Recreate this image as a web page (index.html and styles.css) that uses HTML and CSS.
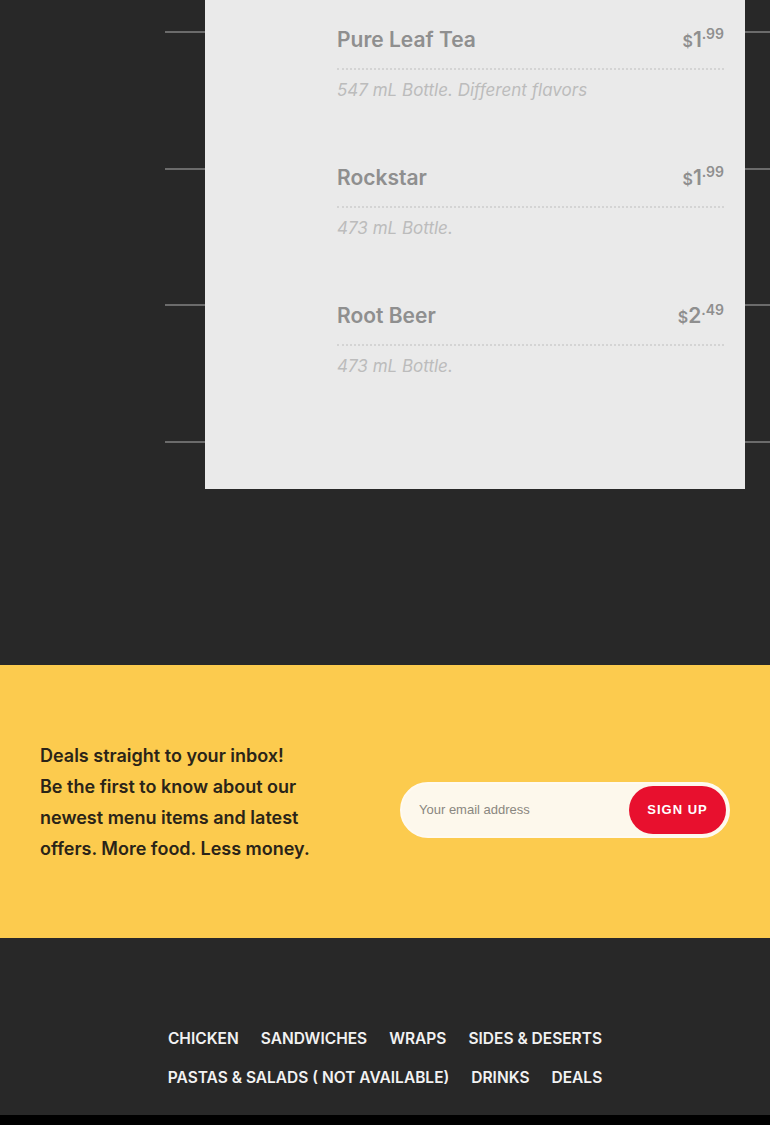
FILE: index.html
```html
<!DOCTYPE html>
<html lang="en">
<head>
    <meta charset="UTF-8">
    <meta name="viewport" content="width=device-width, initial-scale=1.0">
    <title>Drinks</title>
    <link rel="stylesheet" href="styles.css">
</head>
<body>
    <section class="menu">
        <div class="menu-lines">
            <div class="card">
                <div class="item">
                    <div class="item-head">
                        <h3 class="item-name">Pure Leaf Tea</h3>
                        <span class="price"><span class="cur">$</span>1<sup>.99</sup></span>
                    </div>
                    <p class="item-desc">547 mL Bottle. Different flavors</p>
                </div>
                <div class="item">
                    <div class="item-head">
                        <h3 class="item-name">Rockstar</h3>
                        <span class="price"><span class="cur">$</span>1<sup>.99</sup></span>
                    </div>
                    <p class="item-desc">473 mL Bottle.</p>
                </div>
                <div class="item">
                    <div class="item-head">
                        <h3 class="item-name">Root Beer</h3>
                        <span class="price"><span class="cur">$</span>2<sup>.49</sup></span>
                    </div>
                    <p class="item-desc">473 mL Bottle.</p>
                </div>
            </div>
        </div>
    </section>

    <section class="newsletter">
        <p class="newsletter-text">Deals straight to your inbox!<br>Be the first to know about our newest menu items and latest offers. More food. Less money.</p>
        <form class="signup" action="#" method="get">
            <input type="email" placeholder="Your email address">
            <button type="button">SIGN UP</button>
        </form>
    </section>

    <footer>
        <nav class="footer-nav">
            <a href="#">CHICKEN</a>
            <a href="#">SANDWICHES</a>
            <a href="#">WRAPS</a>
            <a href="#">SIDES &amp; DESERTS</a>
            <a href="#">PASTAS &amp; SALADS ( NOT AVAILABLE)</a>
            <a href="#">DRINKS</a>
            <a href="#">DEALS</a>
        </nav>
    </footer>
    <div class="bottom-bar"></div>
</body>
</html>
```

FILE: styles.css
```css
body {
    font-family: Inter, "Noto Sans", sans-serif;
    background-color: #282828;
    margin: 0;
    padding: 0;
}

.menu {
    padding-bottom: 176px;
}

.menu-lines {
    margin-left: 165px;
    padding-left: 40px;
    background: repeating-linear-gradient(to bottom,
        transparent 0, transparent 31px,
        #6b6b6b 31px, #6b6b6b 33px,
        transparent 33px, transparent 136.7px);
}

.card {
    width: 540px;
    height: 489px;
    box-sizing: border-box;
    background-color: #eaeaea;
    padding: 27px 21px 0 132px;
}

.item {
    margin-bottom: 65px;
}

.item-head {
    display: flex;
    justify-content: space-between;
    align-items: flex-start;
    padding-bottom: 14px;
    border-bottom: 2px dotted #d4d4d4;
}

.item-name {
    margin: 0;
    font-size: 21px;
    line-height: 26px;
    font-weight: 600;
    color: #8f8f8f;
}

.price {
    font-size: 21px;
    font-weight: 600;
    line-height: 26px;
    color: #8f8f8f;
}

.price .cur {
    font-size: 16px;
}

.price sup {
    font-size: 14px;
    vertical-align: 8px;
    line-height: 0;
}

.item-desc {
    margin: 10px 0 0;
    font-size: 17px;
    line-height: 20px;
    font-style: italic;
    color: #bcbcbc;
}

.newsletter {
    background-color: #fccb4e;
    height: 273px;
    box-sizing: border-box;
    padding: 0 40px;
    display: flex;
    align-items: center;
    justify-content: space-between;
}

.newsletter-text {
    width: 290px;
    margin: 0;
    font-size: 18px;
    line-height: 31px;
    font-weight: 600;
    color: #2a2418;
}

.signup {
    display: flex;
    align-items: center;
    width: 330px;
    height: 56px;
    margin-top: 16px;
    box-sizing: border-box;
    border: 2px solid #fffaf0;
    border-radius: 28px;
    background-color: #fdf8ec;
    padding: 2px;
}

.signup input {
    flex: 1;
    border: none;
    background: transparent;
    padding: 0 0 0 15px;
    font-family: "Liberation Sans", Arial, sans-serif;
    font-size: 13px;
    outline: none;
}

.signup input::placeholder {
    color: #8a8780;
}

.signup button {
    width: 97px;
    height: 48px;
    border: none;
    border-radius: 24px;
    background-color: #e8102e;
    color: #ffffff;
    font-family: "Liberation Sans", Arial, sans-serif;
    font-weight: bold;
    font-size: 13px;
    letter-spacing: 1px;
    cursor: pointer;
}

footer {
    height: 177px;
    box-sizing: border-box;
    padding-top: 90px;
}

.footer-nav {
    max-width: 470px;
    margin: 0 auto;
    display: flex;
    flex-wrap: wrap;
    justify-content: center;
    column-gap: 22px;
    row-gap: 17px;
}

.footer-nav a {
    color: #f2f2f2;
    text-decoration: none;
    font-size: 15.5px;
    line-height: 22px;
    font-weight: 600;
}

.bottom-bar {
    height: 40px;
    background-color: #000;
}
```
